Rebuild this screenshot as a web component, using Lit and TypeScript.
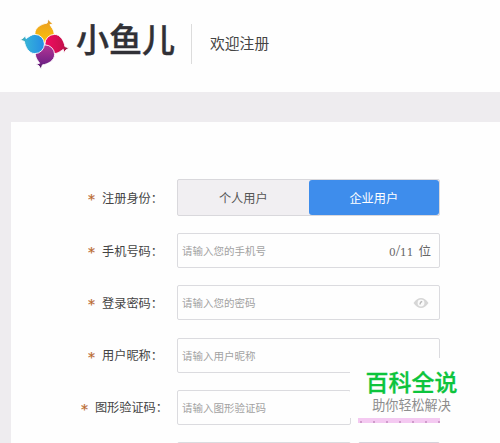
import { css, html, LitElement, nothing, svg } from "lit";
import { customElement, property } from "lit/decorators.js";

const fish = (color: string, x: number, y: number, angle: number) => svg`
  <path
    transform="translate(${x} ${y}) rotate(${angle})"
    d="M-9.6 0A9.6 9.6 0 0 0 9.6 0C9.6 -3.5 7 -6 5.4 -8.8L8.8 -9.4L6 -11.4L4 -14.6L2.6 -10.4C-3 -9.6 -9.6 -6 -9.6 0Z"
    fill="${color}"
    stroke="#fff"
    stroke-width="0.9"
  />
`;

@customElement("fish-logo")
export class FishLogo extends LitElement {
  render() {
    return html`
      <svg width="50" height="50" viewBox="0 0 50 50">
        <defs>
          <linearGradient id="yellow" x1="0" y1="0" x2="0" y2="1">
            <stop offset="0" stop-color="#b98235" />
            <stop offset="0.2" stop-color="#eda31e" />
            <stop offset="1" stop-color="#fcc407" />
          </linearGradient>
          <linearGradient id="red" x1="0" y1="0" x2="0" y2="1">
            <stop offset="0" stop-color="#6b2438" />
            <stop offset="0.25" stop-color="#c9104d" />
            <stop offset="1" stop-color="#f30b62" />
          </linearGradient>
          <linearGradient id="purple" x1="0" y1="0" x2="0" y2="1">
            <stop offset="0" stop-color="#3f1851" />
            <stop offset="0.25" stop-color="#742287" />
            <stop offset="1" stop-color="#b63494" />
          </linearGradient>
          <linearGradient id="blue" x1="0" y1="0" x2="0" y2="1">
            <stop offset="0" stop-color="#4a9c94" />
            <stop offset="0.25" stop-color="#35b1d9" />
            <stop offset="1" stop-color="#258ce5" />
          </linearGradient>
        </defs>
        ${fish("url(#yellow)", 24.5, 14.5, 0)}
        ${fish("url(#red)", 34.5, 25, 90)}
        ${fish("url(#purple)", 25, 35.5, 180)}
        ${fish("url(#blue)", 14.8, 25, 270)}
      </svg>
      <span class="name">小鱼儿</span>
    `;
  }

  static styles = css`
    :host {
      display: flex;
      align-items: center;
    }

    svg {
      margin-right: 6px;
    }

    .name {
      margin-top: -12px;
      color: #303036;
      font-size: 33px;
      font-weight: 500;
      line-height: 40px;
      -webkit-text-stroke: 0.4px #303036;
    }
  `;
}

@customElement("form-row")
export class FormRow extends LitElement {
  @property() label = "";

  render() {
    return html`
      <div class="label ${this.label.length > 4 ? "long" : ""}">
        ${this.label
          ? html`<span class="star">*</span><span>${this.label}：</span>`
          : nothing}
      </div>
      <div class="control"><slot></slot></div>
    `;
  }

  static styles = css`
    :host {
      display: flex;
      height: 35px;
    }

    .label {
      display: flex;
      align-items: center;
      justify-content: flex-end;
      width: 152px;
      margin-right: 14px;
      color: #444;
      font-size: 12.2px;
      white-space: nowrap;
    }

    .long {
      width: 157px;
      margin-right: 9px;
    }

    .star {
      margin-right: 7px;
      padding-top: 3px;
      color: #b9682f;
      font-family: "DejaVu Sans", sans-serif;
      font-size: 14px;
      -webkit-text-stroke: 0.2px #b9682f;
    }

    .control {
      display: flex;
      width: 263px;
      gap: 7px;
    }
  `;
}

@customElement("text-field")
export class TextField extends LitElement {
  @property() placeholder = "";

  render() {
    return html`
      <span class="placeholder">${this.placeholder}</span>
      <slot></slot>
    `;
  }

  static styles = css`
    :host {
      display: flex;
      flex: 1;
      align-items: center;
      justify-content: space-between;
      box-sizing: border-box;
      padding: 0 8px 0 4px;
      border: 1px solid #dbdbdf;
      border-radius: 2px;
      background: #fefefe;
    }

    .placeholder {
      color: #a2a2a2;
      font-size: 10.5px;
      white-space: nowrap;
    }
  `;
}

@customElement("app-root")
export class AppRoot extends LitElement {
  render() {
    return html`
      <header class="header">
        <fish-logo></fish-logo>
        <span class="divider"></span>
        <span class="title">欢迎注册</span>
      </header>
      <main class="card">
        <form-row class="identity" label="注册身份">
          <div class="tabs">
            <span class="tab">个人用户</span>
            <span class="tab active">企业用户</span>
          </div>
        </form-row>
        <form-row label="手机号码">
          <text-field placeholder="请输入您的手机号">
            <span class="counter">
              <span class="digit">0</span>/<span class="digit">11</span>
              <span class="unit">位</span>
            </span>
          </text-field>
        </form-row>
        <form-row label="登录密码">
          <text-field placeholder="请输入您的密码">
            <svg class="eye" width="16" height="12" viewBox="0 0 16 12">
              <path
                d="M0.5 6Q4 1 8 1T15.5 6Q12 11 8 11T0.5 6Z"
                fill="#d6d6d6"
              />
              <circle cx="8" cy="6" r="3.4" fill="#fafafa" />
              <path d="M7 7.6Q7 5 9.2 4.4" fill="none" stroke="#bbb" stroke-width="1.3" />
            </svg>
          </text-field>
        </form-row>
        <form-row label="用户昵称">
          <text-field placeholder="请输入用户昵称"></text-field>
        </form-row>
        <form-row label="图形验证码">
          <text-field placeholder="请输入图形验证码"></text-field>
          <div class="captcha"></div>
        </form-row>
        <form-row>
          <text-field></text-field>
          <div class="send"></div>
        </form-row>
      </main>
      <aside class="badge">
        <span class="brand">百科全说</span>
        <span class="slogan">助你轻松解决</span>
      </aside>
    `;
  }

  static styles = css`
    :host {
      display: flex;
      flex-direction: column;
      position: relative;
      box-sizing: border-box;
      height: 443px;
      overflow: hidden;
      background: #eeecef;
      font-family: "Noto Sans CJK SC", sans-serif;
    }

    .header {
      display: flex;
      flex: none;
      align-items: center;
      box-sizing: border-box;
      height: 92px;
      padding: 0 0 5px 20px;
      background: #fefefe;
    }

    .divider {
      width: 1px;
      height: 40px;
      margin: 0 18px 0 16px;
      background: #dcdcdc;
    }

    .title {
      margin-top: -2px;
      color: #444;
      font-size: 14.8px;
    }

    .card {
      display: flex;
      flex: none;
      flex-direction: column;
      gap: 17.2px;
      margin: 30px 0 0 11px;
      padding-top: 57px;
      background: #fefefe;
    }

    .identity {
      height: 37px;
    }

    .tabs {
      display: flex;
      flex: 1;
      box-sizing: border-box;
      border: 1px solid #d9d8dc;
      border-radius: 2px;
      background: #f1eff2;
    }

    .tab {
      display: flex;
      flex: 1;
      align-items: center;
      justify-content: center;
      border-radius: 3px;
      color: #555;
      font-size: 12.2px;
    }

    .active {
      background: #3e8dec;
      color: #fff;
    }

    .counter {
      display: flex;
      align-items: baseline;
      color: #666;
      font-family: "Liberation Serif", "Noto Sans CJK SC", serif;
      font-size: 16px;
    }

    .digit {
      font-family: "DejaVu Serif", serif;
      font-size: 10.5px;
    }

    .unit {
      margin-left: 5px;
      font-size: 12.5px;
    }

    .eye {
      margin-right: 2px;
    }

    .captcha {
      width: 82px;
      height: 33px;
      background: radial-gradient(circle at 3px 2px, #d09acb 0.8px, transparent 1px)
          0 0 / 13px 6px,
        #f4c9f1;
    }

    .send {
      box-sizing: border-box;
      width: 82px;
      border: 1px solid #d5d2da;
      border-radius: 2px;
      background: #f1eff2;
    }

    .badge {
      display: flex;
      flex-direction: column;
      align-items: center;
      position: absolute;
      top: 358px;
      left: 350px;
      box-sizing: border-box;
      width: 127px;
      height: 60px;
      padding: 9px 4px 0 0;
      background: #fefefe;
      white-space: nowrap;
    }

    .brand {
      color: #0cc43c;
      font-size: 23px;
      font-weight: 500;
      line-height: 29px;
      -webkit-text-stroke: 0.3px #0cc43c;
    }

    .slogan {
      color: #8d8d8d;
      font-size: 13.1px;
      line-height: 17px;
    }
  `;
}
